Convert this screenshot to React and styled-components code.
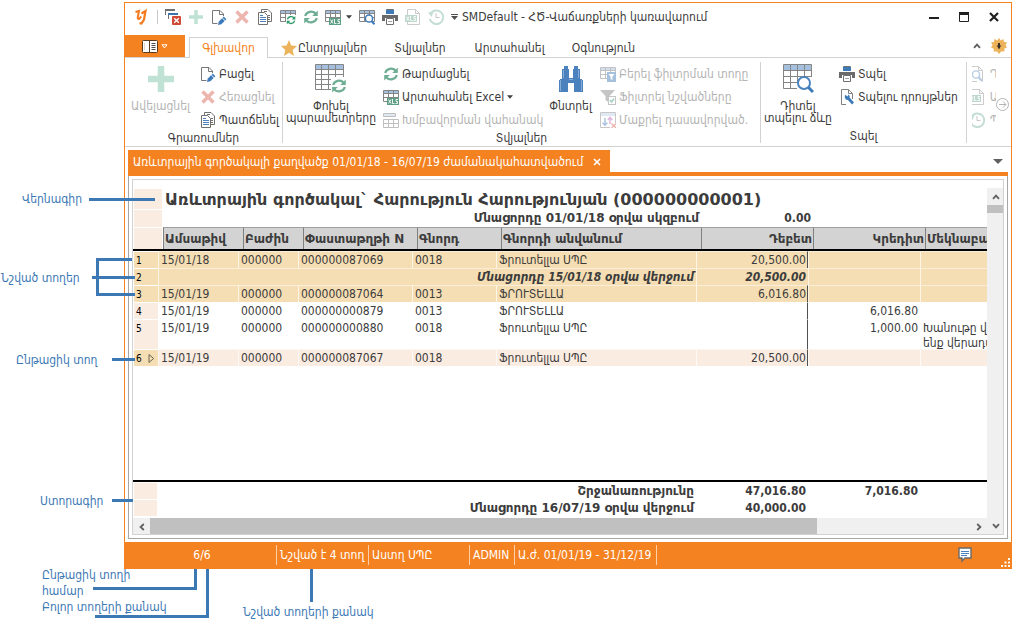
import React, { useState } from "react";
import styled, { createGlobalStyle, css } from "styled-components";

const GlobalStyle = createGlobalStyle`
	* {
		box-sizing: border-box;
	}

	body {
		margin: 0;
		background-color: #ffffff;
		color: #3c3c3c;
		font-family: "DejaVu Sans Condensed", "DejaVu Sans", sans-serif;
		font-size: 12px;
		line-height: 14px;
	}

	button {
		margin: 0;
		padding: 0;
		border: none;
		background: none;
		color: inherit;
		font: inherit;
		cursor: pointer;
	}

	svg {
		display: block;
		flex: none;
	}
`;

const wideFont = css`
	font-family: "DejaVu Sans", sans-serif;
`;

const Page = styled.div`
	position: relative;
	display: flex;
	flex-direction: column;
	min-height: 100vh;
	padding: 2px 5px 53px 124px;
	overflow: hidden;
`;

const Window = styled.main`
	display: flex;
	flex-direction: column;
	flex: 1;
	min-width: 0;
	border: 1px solid #f58220;
	background-color: #ffffff;
`;

/* title bar */

const TitleBar = styled.header`
	display: flex;
	align-items: center;
	height: 32px;
	padding: 0 2px 4px 4px;
`;

const QuickButton = styled.button`
	display: flex;
	align-items: center;
	justify-content: center;
	width: ${({ width }) => width || 23}px;
	height: ${({ tall }) => (tall ? "23px" : "22px")};
	gap: 5px;
	opacity: ${({ faded }) => (faded ? 0.4 : 1)};
`;

const QuickDivider = styled.span`
	width: 1px;
	height: 14px;
	margin: 0 3px 0 5px;
	background-color: #c8c8c8;
`;

const WindowTitle = styled.h1`
	flex: 1;
	margin: 0;
	font-size: 12px;
	font-weight: 400;
	white-space: nowrap;
`;

const WindowButton = styled.button`
	display: flex;
	align-items: center;
	justify-content: center;
	width: 30px;
	height: 24px;
`;

/* ribbon tabs */

const TabRow = styled.nav`
	display: flex;
	height: 23px;
	border-bottom: 1px solid #d2d2d2;
`;

const FileButton = styled.button`
	display: flex;
	align-items: center;
	justify-content: center;
	gap: 3px;
	width: 60px;
	height: 22px;
	background-color: #f58220;
`;

const Tab = styled.button`
	display: flex;
	align-items: center;
	justify-content: center;
	gap: 1px;
	height: 21px;
	margin-top: 2px;
	width: ${({ width }) => width}px;
	white-space: nowrap;

	${({ active }) =>
		active &&
		css`
			margin-left: 4px;
			border: 1px solid #d2d2d2;
			border-bottom: none;
			background-color: #ffffff;
			box-shadow: 0 1px 0 #ffffff;
			color: #f58220;
		`}
`;

const TabTools = styled.div`
	display: flex;
	align-items: center;
	gap: 10px;
	margin-left: auto;
	padding-right: 4px;
`;

/* ribbon */

const Ribbon = styled.section`
	display: flex;
	height: 89px;
	padding-top: 4px;
	border-bottom: 1px solid #d2d2d2;
`;

const Group = styled.div`
	display: flex;
	flex-direction: column;
	flex: none;
	width: ${({ width }) => width}px;
	height: 81px;
	border-right: 1px solid #d2d2d2;
`;

const GroupBody = styled.div`
	display: flex;
	gap: 4px;
	height: 69px;
`;

const GroupLabel = styled.div`
	text-align: center;
	white-space: nowrap;
`;

const BigButton = styled.button`
	display: flex;
	flex-direction: column;
	align-items: center;
	flex: none;
	width: ${({ width }) => width}px;
	gap: 4px;
	color: ${({ disabled }) => (disabled ? "#b4b4b4" : "inherit")};
	line-height: 12px;
	white-space: pre;
`;

const IconBox = styled.span`
	display: flex;
	align-items: center;
	justify-content: center;
	height: 34px;
`;

const ButtonColumn = styled.div`
	display: flex;
	flex-direction: column;
	flex: none;
	width: ${({ width }) => width}px;
`;

const SmallButton = styled.button`
	display: flex;
	align-items: center;
	gap: 3px;
	height: 23px;
	color: ${({ disabled }) => (disabled ? "#b4b4b4" : "inherit")};
	white-space: nowrap;
`;

const Overflow = styled.div`
	display: flex;
	flex: 1;
	min-width: 0;
	padding-left: 5px;
`;

const OverflowItems = styled.div`
	width: 24px;
	overflow: hidden;
`;

const OverflowButton = styled.button`
	align-self: center;
`;

/* document tabs */

const Documents = styled.section`
	display: flex;
	flex-direction: column;
	flex: 1;
	padding: 3px;
	min-height: 0;
`;

const DocumentTabs = styled.div`
	display: flex;
	align-items: flex-end;
	justify-content: space-between;
	height: 26px;
	border-bottom: 4px solid #f58220;
`;

const DocumentTab = styled.div`
	display: flex;
	align-items: center;
	gap: 10px;
	height: 22px;
	padding: 2px 9px 0 5px;
	background-color: #f58220;
	color: #ffffff;
	white-space: nowrap;
`;

const ListButton = styled.button`
	padding: 8px 5px;
`;

const DocumentFrame = styled.div`
	display: flex;
	flex: 1;
	padding: 3px;
	border: 1px solid #a6a6a6;
	border-top: none;
`;

const Sheet = styled.div`
	display: grid;
	grid-template-columns: minmax(0, 1fr) 16px;
	grid-template-rows: 1fr 16px;
	flex: 1;
	min-width: 0;
	padding-top: 8px;
	border: 1px solid #d2d2d2;
`;

/* report table */

const stub = css`
	background-color: #fbece2;
	border-top: 1px solid #ffffff;
	border-left: 1px solid #ffffff;
`;

const Report = styled.table`
	display: flex;
	flex-direction: column;
	min-width: 0;
	overflow: hidden;
`;

const ReportHead = styled.thead`
	display: block;
	border-bottom: 2px solid #000000;
`;

const ReportBody = styled.tbody`
	display: block;
	flex: 1;
`;

const ReportFoot = styled.tfoot`
	display: block;
	padding-bottom: 2px;
	border-top: 2px solid #000000;
`;

const columns = "80px 60px 114px 84px 200px 112px 112px minmax(0, 1fr)";

const HeadRow = styled.tr`
	display: grid;
	grid-template-columns: 30px ${columns};
	height: ${({ height }) => height}px;
`;

const HeadStub = styled.td`
	${stub}
	padding: 0;
	margin-right: 1px;
`;

const ReportTitle = styled.th`
	${wideFont}
	grid-column: 2 / -1;
	padding: 2px 0 0 2px;
	font-size: 16px;
	line-height: 19px;
	text-align: left;
	white-space: nowrap;
`;

const OpeningLabel = styled.td`
	${wideFont}
	grid-column: 2 / 7;
	padding: 2px 2px 0 0;
	font-weight: 700;
	text-align: right;
`;

const OpeningValue = styled.td`
	padding: 2px 2px 0 0;
	font-weight: 700;
	text-align: right;
`;

const ColumnHead = styled.th`
	${wideFont}
	padding: 4px 1px 0;
	border-top: 1px solid #a0a0a0;
	border-left: 1px solid #808080;
	background-color: #d3d3d3;
	font-weight: 700;
	text-align: ${({ align }) => align || "left"};
	white-space: nowrap;
	overflow: hidden;
`;

const rowColors = {
	marked: "#f5deb3",
	current: "#fbece2",
	plain: "#ffffff",
};

const BodyRow = styled.tr`
	display: grid;
	grid-template-columns: 25px ${columns};
	height: ${({ tall }) => (tall ? "30px" : "17px")};
	background-color: ${({ tone }) => rowColors[tone]};
`;

const RowNumber = styled.th`
	${stub}
	display: flex;
	align-items: flex-start;
	gap: 6px;
	padding: 1px 0 0 2px;
	background-color: ${({ tone }) => (tone === "plain" ? "#fbece2" : "#f5deb3")};
	color: #000000;
	font-size: 10px;
	font-weight: 400;
	line-height: 15px;
`;

const Cell = styled.td`
	padding: 1px 2px 0;
	border-top: 1px solid rgba(255, 255, 255, 0.5);
	border-left: 1px solid rgba(255, 255, 255, 0.7);
	line-height: 15px;
	text-align: ${({ align }) => align || "left"};
	white-space: pre;
	overflow: hidden;
`;

const DebitCell = styled(Cell)`
	padding-right: 1px;
	border-right: 1px solid #505050;
	text-align: right;
`;

const BalanceCell = styled(Cell)`
	grid-column: ${({ span }) => span || "auto"};
	font-style: italic;
	font-weight: 700;
	text-align: right;
`;

const FootRow = styled.tr`
	display: grid;
	grid-template-columns: 25px ${columns};
	height: 17px;
`;

const FootStub = styled.td`
	${stub}
	padding: 0;
	margin-right: 1px;
`;

const FootLabel = styled.td`
	${wideFont}
	grid-column: 2 / 7;
	padding: 2px 2px 0 0;
	font-weight: 700;
	text-align: right;
	white-space: nowrap;
`;

const FootValue = styled.td`
	padding: 2px 2px 0 0;
	font-weight: 700;
	text-align: right;
`;

/* scroll bars */

const VerticalBar = styled.div`
	display: flex;
	flex-direction: column;
	grid-row: 1 / 3;
	grid-column: 2;
	background-color: #f0f0f0;
`;

const HorizontalBar = styled.div`
	display: flex;
	background-color: #f0f0f0;
`;

const ScrollButton = styled.button`
	display: flex;
	align-items: center;
	justify-content: center;
	width: 17px;
	height: 17px;
`;

const VerticalThumb = styled.div`
	height: 8px;
	margin-bottom: auto;
	background-color: #c0c0c0;
`;

const HorizontalTrack = styled.div`
	flex: 1;
`;

const HorizontalThumb = styled.div`
	width: 81.4%;
	height: 100%;
	background-color: #c0c0c0;
`;

/* status bar */

const StatusBar = styled.footer`
	display: flex;
	align-items: center;
	height: 26px;
	background-color: #f58220;
	color: #ffffff;
`;

const StatusItem = styled.div`
	flex: none;
	width: ${({ width }) => width}px;
	padding: 3px 0 3px 3px;
	border-right: 1px solid #fbd0a8;
	text-align: ${({ align }) => align || "left"};
	white-space: nowrap;
`;

const StatusTools = styled.div`
	display: flex;
	align-self: stretch;
	align-items: center;
	gap: 28px;
	margin-left: auto;
`;

const Grip = styled.svg`
	align-self: flex-end;
`;

/* callouts over the window */

const Callout = styled.p`
	position: absolute;
	left: ${({ x }) => x}px;
	top: ${({ y }) => y}px;
	margin: 0;
	color: #3c78b4;
	line-height: 16px;
	white-space: pre;
`;

const CalloutLines = styled.svg`
	position: absolute;
	left: 0;
	top: 0;
	pointer-events: none;
`;

/* icons */

const Icon = ({ size, w, h, children, ...rest }) => (
	<svg
		width={w || size || 16}
		height={h || size || 16}
		viewBox={`0 0 ${w || 16} ${h || 16}`}
		fill="none"
		aria-hidden="true"
		{...rest}
	>
		{children}
	</svg>
);

const LogoIcon = () => (
	<Icon w={13} h={16}>
		<path d="M1.5 3L5 2L3.8 8Q3.400 10.400 5.200 9.800L7.200 7.500" stroke="#f47b20" strokeWidth="2" />
		<path d="M7.500 4.500L11.500 2L10 10.500L7.500 14.500L5.500 14.200" stroke="#f47b20" strokeWidth="2.200" />
	</Icon>
);

const CloseAllIcon = () => (
	<Icon>
		<path d="M.5 6V1M3.5 10V5" stroke="#707070" />
		<path d="M0 1H10" stroke="#707070" strokeWidth="2" />
		<path d="M3 5H13" stroke="#3d74ad" strokeWidth="2" />
		<rect x="7" y="7" width="9" height="9" rx="1" fill="#d04a35" />
		<path d="M9.2 9.2L13.8 13.8M13.8 9.2L9.200 13.8" stroke="#fff" strokeWidth="1.400" />
	</Icon>
);

const PlusIcon = ({ size = 14 }) => (
	<Icon size={size}>
		<path d="M8 0V16M0 8H16" stroke="#bfe2d4" strokeWidth="4" />
	</Icon>
);

const EditIcon = () => (
	<Icon>
		<path d="M6.5 14.5H1.5V1.5H9L12.5 5V7" stroke="#787878" />
		<path d="M8.5 1.5V5.5H12.5" stroke="#787878" />
		<path d="M7.8 12.6L12.8 7.6L15.4 10.2L10.4 15.2L7 16Z" fill="#3f7ab8" />
		<path d="M11.3 9L14 11.7" stroke="#fff" />
	</Icon>
);

const DeleteIcon = () => (
	<Icon>
		<path d="M2.5 2.5L13.5 13.5M13.5 2.5L2.5 13.5" stroke="#ecb5ae" strokeWidth="3.4" />
	</Icon>
);

const CopyIcon = () => (
	<Icon>
		<path d="M4.5 3V.5H11L14.5 4V12.5H11" stroke="#707070" />
		<path d="M1.5 3.5H7.5L10.5 6.5V15.5H1.5Z" stroke="#707070" fill="#fff" />
		<path d="M3 6.5H6M3 8.5H9M3 10.5H9M3 12.5H9" stroke="#4b82bd" />
		<path d="M7 2.5H10M11 6.5H13M11 8.5H13M11 10.5H13" stroke="#707070" />
	</Icon>
);

const GridLines = () => (
	<>
		<rect x=".5" y="1.5" width="15" height="3" fill="#a5bfdf" />
		<path d="M.5 1.5H15.5V12.5H.5ZM.5 4.5H15.5M.5 8.5H15.5M5.5 1.5V12.5M10.5 1.5V12.5" stroke="#858585" />
	</>
);

const RefreshShape = ({ color = "#6fae94" }) => (
	<>
		<path d="M2.2 7A6 5.6 0 0 1 12.6 4.6M13.8 9A6 5.6 0 0 1 3.4 11.4" stroke={color} strokeWidth="2.2" />
		<path d="M14.8 1.5V7H9.2ZM1.2 14.5V9H6.8Z" fill={color} />
	</>
);

const RefreshIcon = () => (
	<Icon>
		<RefreshShape />
	</Icon>
);

const TableRefreshIcon = () => (
	<Icon>
		<GridLines />
		<rect x="6" y="6" width="10" height="10" fill="#fff" />
		<g transform="translate(6 6) scale(.63)">
			<RefreshShape color="#2f9a6c" />
		</g>
	</Icon>
);

const XlsTag = ({ y = 8, color = "#5d9d85" }) => (
	<>
		<rect x="4" y={y} width="12" height="7" fill={color} />
		<path
			d={`M5.5 ${y + 1.5}L8 ${y + 5.5}M8 ${y + 1.5}L5.5 ${y + 5.5}M9.5 ${y + 1}V${y + 5.5}H11.5M15 ${y + 1.5}H13V${y + 3.5}H14.5V${y + 5.5}H12.5`}
			stroke="#fff"
			strokeWidth=".9"
		/>
	</>
);

const TableXlsIcon = () => (
	<Icon>
		<GridLines />
		<XlsTag y={9} />
	</Icon>
);

const TableSearchIcon = () => (
	<Icon>
		<GridLines />
		<circle cx="10" cy="9.5" r="3.6" fill="#fff" stroke="#3f7ab8" strokeWidth="1.5" />
		<path d="M12.6 12.2L15.6 15.2" stroke="#3f7ab8" strokeWidth="2" />
	</Icon>
);

const PrinterIcon = () => (
	<Icon>
		<path d="M4.5 5V.5H11.5V5" fill="#fff" stroke="#707070" />
		<rect x="4" y="1" width="8" height="4" fill="#3f7ab8" />
		<path d="M0 6H16V12H0Z" fill="#6a6a6a" />
		<path d="M3 9H13V12H3Z" fill="#fff" />
		<path d="M4.500 9.500H11.500V15.500H4.500Z" fill="#fff" stroke="#707070" />
		<path d="M6 12.500H10" stroke="#a0a0a0" />
	</Icon>
);

const DocXlsIcon = () => (
	<Icon>
		<path d="M2.5 6V.5H10.5L14.5 4.5V6M2.5 13V15.5H14.5V6M10.5 .5V4.5H14.5" stroke="#808080" />
		<g transform="translate(-4 -2)">
			<XlsTag y={8} />
		</g>
	</Icon>
);

const HistoryIcon = () => (
	<Icon>
		<path d="M2.4 5A6.8 6.8 0 1 1 1.8 10" stroke="#6fae94" strokeWidth="2" />
		<path d="M0 3.5L5.5 3L3.5 8Z" fill="#6fae94" />
		<path d="M8 4V8.5H11.5" stroke="#707070" />
	</Icon>
);

const Caret = () => (
	<svg width="6" height="4" viewBox="0 0 7 4" aria-hidden="true">
		<path d="M0 0H7L3.5 4Z" fill="#404040" />
	</svg>
);

const ColumnsIcon = () => (
	<Icon w={32} h={30}>
		<path d="M0 1H29V6H0Z" fill="#a5bfdf" />
		<path d="M.5 .5H28.5V25.5H.5ZM.5 5.5H28.5M.5 10.5H28.5M.5 15.5H28.5M.5 20.5H28.5M6.5 .5V25.5M13.5 .5V25.5M20.5 .5V25.5" stroke="#858585" />
		<rect x="16" y="13" width="16" height="17" fill="#fff" />
		<g transform="translate(16 14)">
			<RefreshShape />
		</g>
	</Icon>
);

const PreviewIcon = () => (
	<Icon w={31} h={30}>
		<path d="M0 1H29V6H0Z" fill="#a5bfdf" />
		<path d="M.5 .5H28.5V24.5H.5ZM.5 6.5H28.5M.5 12.5H28.5M.5 18.5H28.5M7.5 .5V24.5M14.5 .5V24.5M21.5 .5V24.5" stroke="#858585" />
		<path d="M14 19V30H31V13H28Z" fill="#fff" />
		<circle cx="21" cy="19" r="6" fill="#fff" stroke="#4b85bf" strokeWidth="2" />
		<path d="M25.5 23.5L30 28" stroke="#3f7ab8" strokeWidth="3" />
	</Icon>
);

const BinocularsIcon = () => (
	<Icon w={24} h={26}>
		<path d="M5 0H9V3H10V12H14V3H15V0H19V3H21V13H23V14H24V26H15V17H9V26H0V14H1V13H3V3H5Z" fill="#4b82bd" />
		<path d="M1.500 14V25M22.500 14V25M4.500 4V12M19.500 4V12M10 13.500H14" stroke="#86abd4" />
	</Icon>
);

const GroupPanelIcon = () => (
	<Icon opacity=".5">
		<path d="M1 2H12V5H1Z" fill="#c0d2e8" />
		<path d="M.5 1.5H12.5V4.5H.5ZM.5 7.5H15.5V15.5H.5ZM.5 11.5H15.5M5.500 7.5V15.5M10.500 7.5V15.5" stroke="#808080" />
	</Icon>
);

const FilterRowIcon = () => (
	<Icon opacity=".5">
		<GridLines />
		<rect x="7" y="6" width="9" height="10" fill="#4b82bd" />
		<path d="M8.5 8H14.5L12.4 10.7V14L10.6 13V10.7Z" fill="#fff" />
	</Icon>
);

const FilterMarkedIcon = () => (
	<Icon opacity=".45">
		<path d="M0 1H15L9.5 7V14L5.5 11V7Z" fill="#808080" />
		<rect x="8.500" y="7.500" width="7" height="8" fill="#fff" stroke="#808080" />
		<path d="M10 11L11.500 13L14.2 9.500" stroke="#3f9d74" strokeWidth="1.6" />
	</Icon>
);

const ClearSortIcon = () => (
	<Icon opacity=".5">
		<path d="M10 15.500H.5V.5H15.5V11" stroke="#909090" />
		<path d="M1 1H15V4H1Z" fill="#c0d2e8" />
		<path d="M5 6V13M2.6 10.6L5 13.2L7.4 10.6" stroke="#4b82bd" strokeWidth="1.4" />
		<path d="M10 12V5.5M7.8 8L10 5.4L12.4 8" stroke="#c06cb8" strokeWidth="1.4" />
		<path d="M11.5 11.5L16 16M16 11.5L11.5 16" stroke="#d9695c" strokeWidth="1.3" />
	</Icon>
);

const PageSetupIcon = () => (
	<Icon>
		<path d="M7 15.5H2.5V.5H9.5L13.5 4.5V10M9.5 .5V4.5H13.5" stroke="#808080" />
		<path d="M9.500 9.500L14 14.500" stroke="#3f7ab8" strokeWidth="2.8" />
		<path d="M6.500 5.800L8.5 7.5L9.600 5.400A3.2 3.2 0 0 1 8.500 11A3.2 3.2 0 0 1 6.500 5.800Z" fill="#3f7ab8" />
	</Icon>
);

const PageSearchIcon = () => (
	<Icon>
		<path d="M8 15.5H2.5V.5H9.5L13.5 4.5V15.5M9.5 .5V4.5H13.5" stroke="#808080" />
		<circle cx="7" cy="8.5" r="3.6" stroke="#4b82bd" strokeWidth="1.4" fill="#fff" />
		<path d="M9.5 11L13 15" stroke="#4b82bd" strokeWidth="2" />
	</Icon>
);

const StarIcon = () => (
	<Icon>
		<path d="M8 0L10.3 5.4L16 6L11.7 9.9L13 16L8 12.8L3 16L4.3 9.9L0 6L5.7 5.4Z" fill="#ecb35a" />
	</Icon>
);

const MenuIcon = () => (
	<Icon w={16} h={13}>
		<rect x=".5" y=".5" width="15" height="12" rx="1" fill="#fff" stroke="#5a3a1c" />
		<path d="M7.500 .5V12.500" stroke="#5a3a1c" />
		<path d="M2.500 3V10" stroke="#e4d4c6" />
		<path d="M9.500 3.5H13.500M9.500 5.500H13.500M9.500 7.500H13.500M9.500 9.500H13.500" stroke="#4a4a4a" />
	</Icon>
);

const SunIcon = () => (
	<Icon>
		<path d="M8 0L9.8 2.6L12.4 1L13 4L16 4.2L14.6 7L16 9.5L13.4 10.6L13.4 13.6L10.4 13.2L8 16L5.8 13.2L2.8 13.8L2.8 10.8L0 9.6L1.6 7L0 4.4L3 4L3.4 1L6.2 2.6Z" fill="#ecb35a" />
		<path d="M8 5V10.500" stroke="#3a3226" strokeWidth="2" />
		<path d="M5.500 7.500H10.500L8 10.500Z" fill="#3a3226" />
	</Icon>
);

const Chevron = ({ rotate = 0 }) => (
	<svg width="8" height="8" viewBox="0 0 8 8" fill="none" aria-hidden="true">
		<path d="M1 5.8L4 2.6L7 5.8" stroke="#606060" strokeWidth="1.8" transform={`rotate(${rotate} 4 4)`} />
	</svg>
);

const NoteIcon = () => (
	<svg width="14" height="16" viewBox="0 0 14 16" aria-hidden="true">
		<path d="M1 1H13V11H7L4 14V11H1Z" fill="#fff" stroke="#6a6a6a" strokeWidth="1.4" />
		<path d="M3 4.500H11M3 6.500H11M3 8.500H9" stroke="#4b82bd" />
	</svg>
);

const quickActions = [
	{ name: "close-all", icon: <CloseAllIcon /> },
	{ name: "add", icon: <PlusIcon /> },
	{ name: "edit", icon: <EditIcon /> },
	{ name: "delete", icon: <DeleteIcon /> },
	{ name: "copy", icon: <CopyIcon /> },
	{ name: "parameters", icon: <TableRefreshIcon /> },
	{ name: "refresh", icon: <RefreshIcon /> },
	{ name: "export", icon: <TableXlsIcon />, menu: true },
	{ name: "preview", icon: <TableSearchIcon /> },
	{ name: "print", icon: <PrinterIcon /> },
	{ name: "xls", icon: <DocXlsIcon />, faded: true },
	{ name: "history", icon: <HistoryIcon />, faded: true },
];

const tabs = [
	{ name: "Գլխավոր", width: 79 },
	{ name: "Ընտրյալներ", width: 112, icon: <StarIcon /> },
	{ name: "Տվյալներ", width: 80 },
	{ name: "Արտահանել", width: 99 },
	{ name: "Օգնություն", width: 89 },
];

const heads = [
	{ name: "Ամսաթիվ" },
	{ name: "Բաժին" },
	{ name: "Փաստաթղթի N" },
	{ name: "Գնորդ" },
	{ name: "Գնորդի անվանում" },
	{ name: "Դեբետ", align: "right" },
	{ name: "Կրեդիտ", align: "right" },
	{ name: "Մեկնաբանություն" },
];

const rows = [
	{ id: 1, tone: "marked", date: "15/01/18", unit: "000000", doc: "000000087069", code: "0018", buyer: "Ֆրուտելլա ՍՊԸ", debit: "20,500.00" },
	{ id: 2, tone: "marked", balance: "Մնացորդը 15/01/18 օրվա վերջում", debit: "20,500.00" },
	{ id: 3, tone: "marked", date: "15/01/19", unit: "000000", doc: "000000087064", code: "0013", buyer: "ՖՐՈՒՏԵԼԼԱ", debit: "6,016.80" },
	{ id: 4, tone: "plain", date: "15/01/19", unit: "000000", doc: "000000000879", code: "0013", buyer: "ՖՐՈՒՏԵԼԼԱ", credit: "6,016.80" },
	{
		id: 5,
		tone: "plain",
		date: "15/01/19",
		unit: "000000",
		doc: "000000000880",
		code: "0018",
		buyer: "Ֆրուտելլա ՍՊԸ",
		credit: "1,000.00",
		note: "Խանութը վերադարձ\nենք վերադարձրել",
	},
	{ id: 6, tone: "current", date: "15/01/19", unit: "000000", doc: "000000087067", code: "0018", buyer: "Ֆրուտելլա ՍՊԸ", debit: "20,500.00" },
];

const callouts = [
	{ text: "Վերնագիր", x: 22, y: 191 },
	{ text: "Նշված տողեր", x: 1, y: 270 },
	{ text: "Ընթացիկ տող", x: 16, y: 352 },
	{ text: "Ստորագիր", x: 40, y: 493 },
	{ text: "Ընթացիկ տողի\nհամար", x: 42, y: 567 },
	{ text: "Բոլոր տողերի քանակ", x: 42, y: 599 },
	{ text: "Նշված տողերի քանակ", x: 243, y: 604 },
];

const ReportRow = ({ row }) => (
	<BodyRow tone={row.tone} tall={Boolean(row.note)}>
		<RowNumber tone={row.tone} scope="row">
			{row.id}
			{row.tone === "current" && (
				<Icon w={7} h={13}>
					<path d="M1 3.5V11.5L5.6 7.5Z" stroke="#6a6250" />
				</Icon>
			)}
		</RowNumber>
		{row.balance ? (
			<>
				<BalanceCell span="2 / 7">{row.balance}</BalanceCell>
				<BalanceCell>{row.debit}</BalanceCell>
			</>
		) : (
			<>
				<Cell>{row.date}</Cell>
				<Cell>{row.unit}</Cell>
				<Cell>{row.doc}</Cell>
				<Cell>{row.code}</Cell>
				<Cell>{row.buyer}</Cell>
				<DebitCell>{row.debit}</DebitCell>
			</>
		)}
		<Cell align="right">{row.credit}</Cell>
		<Cell>{row.note}</Cell>
	</BodyRow>
);

const App = () => {
	const [activeTab, setActiveTab] = useState("Գլխավոր");

	return (
		<Page>
			<GlobalStyle />
			<Window>
				<TitleBar>
					<QuickButton aria-label="logo">
						<LogoIcon />
					</QuickButton>
					<QuickDivider />
					{quickActions.map((action) => (
						<QuickButton key={action.name} aria-label={action.name} faded={action.faded} width={action.menu ? 33 : 23}>
							{action.icon}
							{action.menu && <Caret />}
						</QuickButton>
					))}
					<QuickButton aria-label="customize" width={15}>
						<svg width="7" height="7" viewBox="0 0 7 7" aria-hidden="true">
							<path d="M0 .5H7" stroke="#505050" />
							<path d="M0 2H7L3.5 6Z" fill="#505050" />
						</svg>
					</QuickButton>
					<WindowTitle>SMDefault - ՀԾ-Վաճառքների կառավարում</WindowTitle>
					<WindowButton aria-label="minimize">
						<svg width="10" height="10" viewBox="0 0 10 10">
							<path d="M0 6H10" stroke="#202020" strokeWidth="2" />
						</svg>
					</WindowButton>
					<WindowButton aria-label="maximize">
						<svg width="10" height="10" viewBox="0 0 10 10" fill="none">
							<path d="M.5 .5H9.5V9.5H.5Z" stroke="#202020" />
							<path d="M0 1.5H10" stroke="#202020" strokeWidth="3" />
						</svg>
					</WindowButton>
					<WindowButton aria-label="close">
						<svg width="10" height="10" viewBox="0 0 10 10">
							<path d="M1 1L9 9M9 1L1 9" stroke="#202020" strokeWidth="2.2" />
						</svg>
					</WindowButton>
				</TitleBar>

				<TabRow>
					<FileButton aria-label="menu">
						<MenuIcon />
						<svg width="7" height="5" viewBox="0 0 7 5" fill="none">
							<path d="M1 .8H6L3.5 4Z" stroke="#fff" />
						</svg>
					</FileButton>
					{tabs.map((tab) => (
						<Tab key={tab.name} width={tab.width} active={tab.name === activeTab} onClick={() => setActiveTab(tab.name)}>
							{tab.icon}
							{tab.name}
						</Tab>
					))}
					<TabTools>
						<Chevron />
						<SunIcon />
					</TabTools>
				</TabRow>

				<Ribbon>
					<Group width={158}>
						<GroupBody>
							<BigButton width={71} disabled>
								<IconBox>
									<PlusIcon size={26} />
								</IconBox>
								Ավելացնել
							</BigButton>
							<ButtonColumn width={82}>
								<SmallButton>
									<EditIcon />
									Բացել
								</SmallButton>
								<SmallButton disabled>
									<DeleteIcon />
									Հեռացնել
								</SmallButton>
								<SmallButton>
									<CopyIcon />
									Պատճենել
								</SmallButton>
							</ButtonColumn>
						</GroupBody>
						<GroupLabel>Գրառումներ</GroupLabel>
					</Group>

					<Group width={478}>
						<GroupBody>
							<BigButton width={96}>
								<IconBox>
									<ColumnsIcon />
								</IconBox>
								{"Փոխել\nպարամետրերը"}
							</BigButton>
							<ButtonColumn width={158}>
								<SmallButton>
									<RefreshIcon />
									Թարմացնել
								</SmallButton>
								<SmallButton>
									<TableXlsIcon />
									Արտահանել Excel
									<Caret />
								</SmallButton>
								<SmallButton disabled>
									<GroupPanelIcon />
									Խմբավորման վահանակ
								</SmallButton>
							</ButtonColumn>
							<BigButton width={51}>
								<IconBox>
									<BinocularsIcon />
								</IconBox>
								Փնտրել
							</BigButton>
							<ButtonColumn width={156}>
								<SmallButton disabled>
									<FilterRowIcon />
									Բերել ֆիլտրման տողը
								</SmallButton>
								<SmallButton disabled>
									<FilterMarkedIcon />
									Ֆիլտրել նշվածները
								</SmallButton>
								<SmallButton disabled>
									<ClearSortIcon />
									Մաքրել դասավորված.
								</SmallButton>
							</ButtonColumn>
						</GroupBody>
						<GroupLabel>Տվյալներ</GroupLabel>
					</Group>

					<Group width={206}>
						<GroupBody>
							<BigButton width={74}>
								<IconBox>
									<PreviewIcon />
								</IconBox>
								{"Դիտել\nտպելու ձևը"}
							</BigButton>
							<ButtonColumn width={126}>
								<SmallButton>
									<PrinterIcon />
									Տպել
								</SmallButton>
								<SmallButton>
									<PageSetupIcon />
									Տպելու դրույթներ
								</SmallButton>
							</ButtonColumn>
						</GroupBody>
						<GroupLabel>Տպել</GroupLabel>
					</Group>

					<Overflow>
						<OverflowItems>
							<QuickButton aria-label="view" faded tall>
								<PageSearchIcon />Դ
							</QuickButton>
							<QuickButton aria-label="export xls" faded tall>
								<DocXlsIcon />Ա
							</QuickButton>
							<QuickButton aria-label="change history" faded tall>
								<HistoryIcon />Պ
							</QuickButton>
						</OverflowItems>
						<OverflowButton aria-label="scroll ribbon">
							<svg width="13" height="13" viewBox="0 0 13 13" fill="none" stroke="#b4b4b4">
								<circle cx="6.5" cy="6.5" r="6" />
								<path d="M3 6.5H10M7 3.5L10 6.5L7 9.5" />
							</svg>
						</OverflowButton>
					</Overflow>
				</Ribbon>

				<Documents>
					<DocumentTabs>
						<DocumentTab>
							Առևտրային գործակալի քաղվածք 01/01/18 - 16/07/19 ժամանակահատվածում
							<button aria-label="close document">
								<svg width="8" height="8" viewBox="0 0 8 8">
									<path d="M1 1L7 7M7 1L1 7" stroke="#fff" strokeWidth="1.6" />
								</svg>
							</button>
						</DocumentTab>
						<ListButton aria-label="documents">
							<svg width="10" height="5" viewBox="0 0 10 5">
								<path d="M0 0H10L5 5Z" fill="#606060" />
							</svg>
						</ListButton>
					</DocumentTabs>
					<DocumentFrame>
						<Sheet>
							<Report>
								<ReportHead>
									<HeadRow height={21}>
										<HeadStub />
										<ReportTitle>Առևտրային գործակալ` Հարություն Հարությունյան (000000000001)</ReportTitle>
									</HeadRow>
									<HeadRow height={18}>
										<HeadStub />
										<OpeningLabel>Մնացորդը 01/01/18 օրվա սկզբում</OpeningLabel>
										<OpeningValue>0.00</OpeningValue>
									</HeadRow>
									<HeadRow height={22}>
										<HeadStub />
										{heads.map((head) => (
											<ColumnHead key={head.name} align={head.align} scope="col">
												{head.name}
											</ColumnHead>
										))}
									</HeadRow>
								</ReportHead>
								<ReportBody>
									{rows.map((row) => (
										<ReportRow key={row.id} row={row} />
									))}
								</ReportBody>
								<ReportFoot>
									<FootRow>
										<FootStub />
										<FootLabel>Շրջանառությունը</FootLabel>
										<FootValue>47,016.80</FootValue>
										<FootValue>7,016.80</FootValue>
									</FootRow>
									<FootRow>
										<FootStub />
										<FootLabel>Մնացորդը 16/07/19 օրվա վերջում</FootLabel>
										<FootValue>40,000.00</FootValue>
									</FootRow>
								</ReportFoot>
							</Report>
							<HorizontalBar>
								<ScrollButton aria-label="scroll left">
									<Chevron rotate={-90} />
								</ScrollButton>
								<HorizontalTrack>
									<HorizontalThumb />
								</HorizontalTrack>
								<ScrollButton aria-label="scroll right">
									<Chevron rotate={90} />
								</ScrollButton>
							</HorizontalBar>
							<VerticalBar>
								<ScrollButton aria-label="scroll up">
									<Chevron />
								</ScrollButton>
								<VerticalThumb />
								<ScrollButton aria-label="scroll down">
									<Chevron rotate={180} />
								</ScrollButton>
							</VerticalBar>
						</Sheet>
					</DocumentFrame>
				</Documents>

				<StatusBar>
					<StatusItem width={152} align="center">
						6/6
					</StatusItem>
					<StatusItem width={92}>Նշված է 4 տող</StatusItem>
					<StatusItem width={101}>Աստղ ՍՊԸ</StatusItem>
					<StatusItem width={45}>ADMIN</StatusItem>
					<StatusItem width={142}>Ա.ժ. 01/01/19 - 31/12/19</StatusItem>
					<StatusTools>
						<NoteIcon />
						<Grip width="11" height="11" viewBox="0 0 11 11">
							<path d="M8 2H10M4.5 5.5H6.5M8 5.5H10M1 9H3M4.5 9H6.5M8 9H10" stroke="#fff" strokeWidth="2" />
						</Grip>
					</StatusTools>
				</StatusBar>
			</Window>

			<CalloutLines width="420" height="622" viewBox="0 0 420 622" fill="none" stroke="#3c78b4" strokeWidth="3">
				<path d="M89 199.500H155" />
				<path d="M132 259.500H97.500V294.500H135M92 277.500H135" />
				<path d="M112 359.500H135" />
				<path d="M112 500.500H133" />
				<path d="M195.500 569V588.500H93" />
				<path d="M207.500 569V616.500H95" />
				<path d="M311.500 569V602" />
			</CalloutLines>
			{callouts.map((callout) => (
				<Callout key={callout.text} x={callout.x} y={callout.y}>
					{callout.text}
				</Callout>
			))}
		</Page>
	);
};

export default App;
